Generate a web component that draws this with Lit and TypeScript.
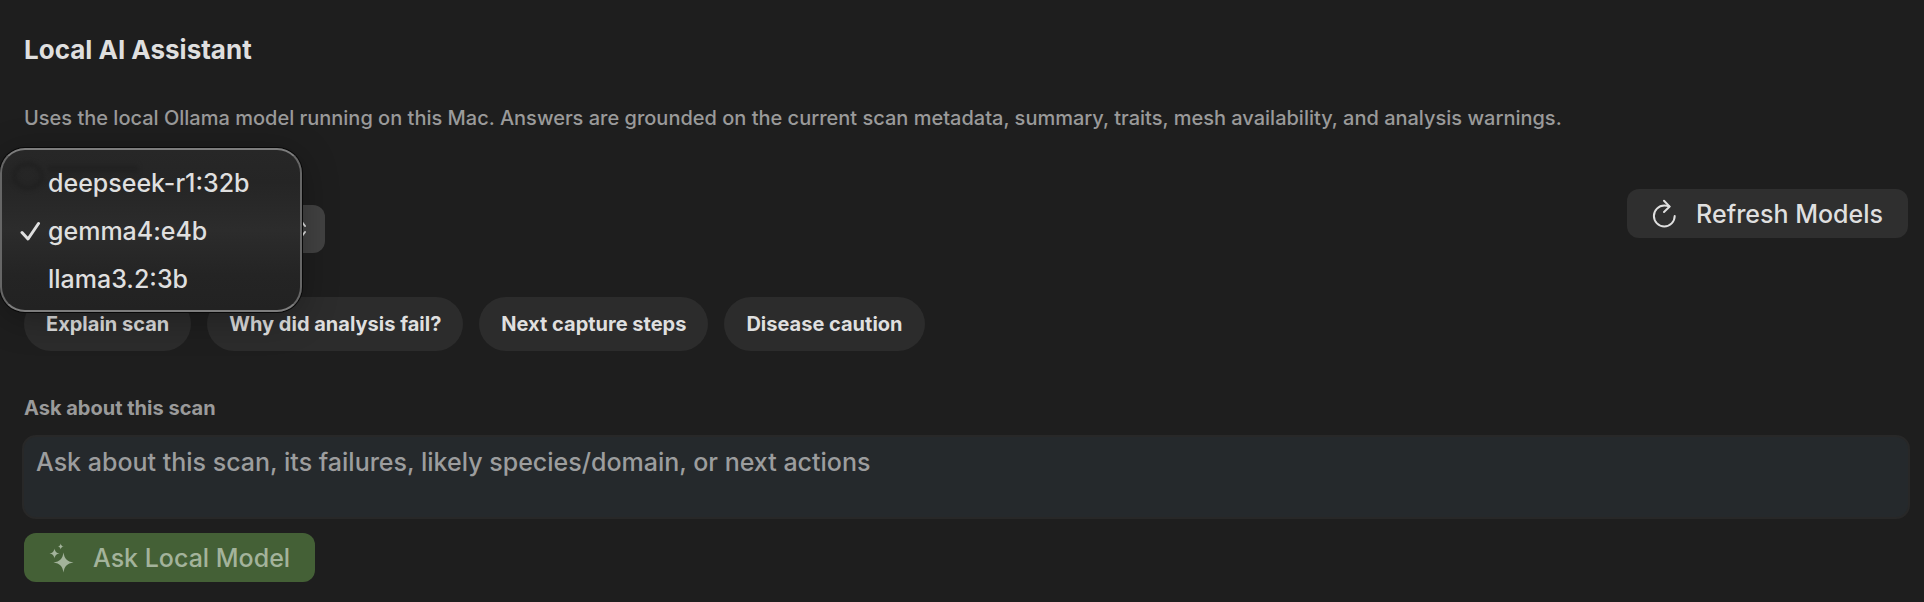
import { LitElement, html, css, svg } from "lit";
import { customElement, state } from "lit/decorators.js";

const MODELS = ["deepseek-r1:32b", "gemma4:e4b", "llama3.2:3b"];
const PROMPTS = ["Explain scan", "Why did analysis fail?", "Next capture steps", "Disease caution"];

const checkIcon = svg`<path d="M2 11.5 8 18 18.5 2.5" fill="none" stroke="currentColor" stroke-width="3" stroke-linecap="round" stroke-linejoin="round"/>`;

@customElement("app-root")
export class AppRoot extends LitElement {
  @state() private model = "gemma4:e4b";
  @state() private open = true;
  @state() private question = "";

  static styles = css`
    :host {
      display: block;
      box-sizing: border-box;
      min-height: 100vh;
      padding: 38px 16px 20px 24px;
      background: #1e1e1e;
      color: #dfdfdf;
      font-family: Inter, "Liberation Sans", sans-serif;
      font-size: 20px;
      font-weight: 500;
      line-height: 24px;
    }
    button, select, textarea {
      font: inherit;
      color: inherit;
      border: 0;
      margin: 0;
      box-sizing: border-box;
    }
    .panel {
      display: flex;
      flex-direction: column;
      gap: 44px;
    }
    h1 {
      margin: 0;
      font-size: 26px;
      line-height: 24px;
      font-weight: 700;
    }
    .about {
      margin: 0;
      color: #9a9a9a;
    }
    .models {
      display: flex;
      align-items: center;
      justify-content: space-between;
    }
    .picker {
      position: relative;
      padding-top: 31px;
    }
    .select {
      position: relative;
      display: flex;
    }
    select {
      appearance: none;
      width: 301px;
      height: 48px;
      padding: 0 40px 0 20px;
      border-radius: 12px;
      background: #424242;
      font-size: 25px;
    }
    .arrows {
      position: absolute;
      right: 15px;
      top: 15px;
      pointer-events: none;
    }
    .menu {
      position: absolute;
      left: -24px;
      top: -26px;
      z-index: 1;
      box-sizing: border-box;
      width: 302px;
      padding: 9px 0 7px;
      border: 2px solid #7d7d7d;
      border-left-color: #666;
      border-right-color: #666;
      border-radius: 25px;
      background: linear-gradient(#272727, #252525 20%, #2c2c2c 50%, #242424 78%, #222);
      box-shadow: 0 0 0 1px #080808, 0 6px 36px rgba(0, 0, 0, 0.3);
    }
    .smear {
      position: absolute;
      left: 6px;
      top: 6px;
      filter: blur(2px);
      pointer-events: none;
    }
    .option {
      position: relative;
      display: flex;
      align-items: center;
      gap: 7px;
      width: 100%;
      height: 48px;
      padding: 0 18px;
      background: none;
      text-align: left;
      font-size: 25px;
    }
    .option svg {
      flex: none;
      width: 21px;
      height: 21px;
    }
    .action {
      display: flex;
      align-items: center;
      height: 49px;
      padding: 0 25px;
      border-radius: 12px;
      background: #2f2f2f;
      font-size: 25px;
      gap: 19px;
    }
    .action svg {
      flex: none;
      width: 25px;
      height: 30px;
    }
    .chips {
      display: flex;
      flex-wrap: wrap;
      gap: 16px;
    }
    .chip {
      height: 54px;
      padding: 0 22px;
      border-radius: 27px;
      background: #2c2c2c;
      font-weight: 700;
    }
    .ask {
      display: flex;
      flex-direction: column;
      align-items: flex-start;
      gap: 14px;
    }
    .label {
      color: #9a9a9a;
      font-weight: 700;
      line-height: 26px;
    }
    textarea {
      display: block;
      align-self: stretch;
      height: 84px;
      margin: 0 -2px;
      padding: 9px 12px;
      border: 2px solid #282828;
      border-radius: 14px;
      background: #25292c;
      font-size: 25px;
      line-height: 32px;
      resize: none;
      outline: none;
    }
    textarea::placeholder {
      color: #9c9d9e;
      opacity: 1;
    }
    .primary {
      background: #446036;
      color: #a3b39b;
    }
  `;

  private choose(model: string) {
    this.model = model;
    this.open = false;
  }

  render() {
    return html`
      <main class="panel">
        <h1>Local AI Assistant</h1>
        <p class="about">Uses the local Ollama model running on this Mac. Answers are grounded on the current scan metadata, summary, traits, mesh availability, and analysis warnings.</p>
        <section class="models">
          <div class="picker">
            <div class="select">
              <select aria-label="Model" .value=${this.model} @change=${(e: Event) => this.choose((e.target as HTMLSelectElement).value)}>
                ${MODELS.map((m) => html`<option ?selected=${m === this.model}>${m}</option>`)}
              </select>
              <svg class="arrows" width="12" height="18" viewBox="0 0 12 18" fill="none" stroke="#dfdfdf" stroke-width="2" stroke-linecap="round" stroke-linejoin="round" aria-hidden="true">
                <path d="M1 6l3-4 3 4M1 12l3 4 3-4" />
              </svg>
            </div>
            ${this.open
              ? html`<div class="menu" role="listbox" aria-label="Model">
                  <svg class="smear" width="140" height="40" viewBox="0 0 140 40" fill="none" aria-hidden="true">
                    <ellipse cx="20" cy="20" rx="14" ry="12" stroke="#1e1e1e" stroke-width="3" />
                    <path d="M40 9h90v8H40z" fill="#1f1f1f" opacity=".7" />
                  </svg>
                  ${MODELS.map(
                    (m) => html`<button class="option" role="option" aria-selected=${m === this.model} @click=${() => this.choose(m)}>
                      <svg viewBox="0 0 21 21" aria-hidden="true">${m === this.model ? checkIcon : ""}</svg>
                      <span>${m}</span>
                    </button>`
                  )}
                </div>`
              : ""}
          </div>
          <button class="action">
            <svg viewBox="0 0 25 30" fill="none" stroke="currentColor" stroke-width="2" stroke-linecap="round" stroke-linejoin="round" aria-hidden="true">
              <path d="M22.700 17A10.400 10.400 0 1 1 12.300 6.600c1.900 0 3.500.3 5 .9" />
              <path d="M12 1.800 17.700 7.600 12 13" />
            </svg>
            Refresh Models
          </button>
        </section>
        <nav class="chips" aria-label="Suggested questions">
          ${PROMPTS.map((p) => html`<button class="chip" @click=${() => (this.question = p)}>${p}</button>`)}
        </nav>
        <section class="ask">
          <label class="label" for="question">Ask about this scan</label>
          <textarea id="question" .value=${this.question} placeholder="Ask about this scan, its failures, likely species/domain, or next actions"></textarea>
          <button class="action primary">
            <svg viewBox="0 0 25 30" fill="currentColor" aria-hidden="true">
              <path d="M14.500 9.500C15.600 16 18 18.400 24.500 19.500 18 20.600 15.600 23 14.500 29.500 13.400 23 11 20.600 4.500 19.500 11 18.400 13.400 16 14.500 9.500Z" />
              <path d="M5.500 5.500C6.200 8.800 7.200 9.800 10.500 10.500 7.200 11.200 6.200 12.200 5.500 15.500 4.800 12.200 3.800 11.200 .5 10.500 3.800 9.800 4.800 8.800 5.500 5.500Z" />
              <path d="M11.700.5c.4 2 1 2.600 3 3-2 .4-2.600 1-3 3-.4-2-1-2.600-3-3 2-.4 2.600-1 3-3Z" />
            </svg>
            Ask Local Model
          </button>
        </section>
      </main>
    `;
  }
}
